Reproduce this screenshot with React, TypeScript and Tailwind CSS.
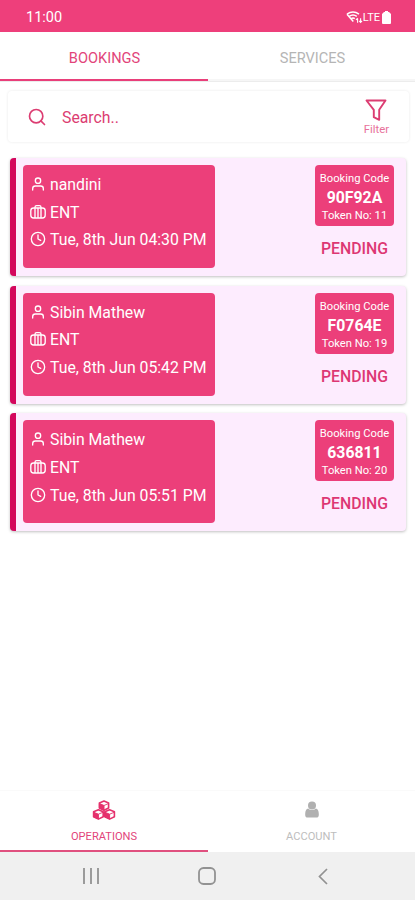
import React from "react";
import { FiClock, FiSearch, FiUser } from "react-icons/fi";

interface Booking {
  name: string;
  department: string;
  time: string;
  code: string;
  token: number;
  status: string;
}

const bookings: Booking[] = [
  {
    name: "nandini",
    department: "ENT",
    time: "Tue, 8th Jun 04:30 PM",
    code: "90F92A",
    token: 11,
    status: "PENDING",
  },
  {
    name: "Sibin Mathew",
    department: "ENT",
    time: "Tue, 8th Jun 05:42 PM",
    code: "F0764E",
    token: 19,
    status: "PENDING",
  },
  {
    name: "Sibin Mathew",
    department: "ENT",
    time: "Tue, 8th Jun 05:51 PM",
    code: "636811",
    token: 20,
    status: "PENDING",
  },
];

const SuitcaseIcon: React.FC = () => (
  <svg width="16" height="16" viewBox="0 0 16 16" fill="none" stroke="currentColor" strokeWidth="1.35">
    <rect x="0.8" y="4" width="14.4" height="10" rx="2.8" />
    <path d="M5 14V3.200a1.600 1.600 0 0 1 1.600-1.600h2.800A1.600 1.600 0 0 1 11 3.200V14M8 4v10" />
  </svg>
);

const FunnelIcon: React.FC = () => (
  <svg width="24" height="24" viewBox="0 0 24 24" fill="none" stroke="currentColor" strokeWidth="1.9" strokeLinejoin="round">
    <path d="M2.500 2.500h19l-6.300 9.300v10l-5.400-2.600v-7.400z" />
  </svg>
);

// three stacked cubes, left faces filled
const CubesIcon: React.FC = () => (
  <svg width="24" height="20" viewBox="0 0 24 20" stroke="currentColor" strokeWidth="1.6" strokeLinejoin="round">
    <g fill="none">
      <path d="M12 1l4.600 2v5L12 10.300 7.400 8V3z" />
      <path d="M6.400 9.800l4.800 2v5l-4.800 2.300-4.800-2.300v-5z" />
      <path d="M17.600 9.800l4.800 2v5l-4.800 2.300-4.800-2.300v-5z" />
    </g>
    <g fill="currentColor" strokeWidth="1">
      <path d="M7.400 3.500l4.600 2v4.500L7.400 8z" />
      <path d="M1.600 12.200l4.800 2v4.600l-4.800-2z" />
      <path d="M12.800 12.200l4.800 2v4.600l-4.800-2z" />
    </g>
    <g fill="none" strokeWidth="0.9">
      <path d="M12 5.500l4.600-2M6.400 14.200l4.800-2M17.600 14.200l4.800-2" />
    </g>
  </svg>
);

const PersonIcon: React.FC = () => (
  <svg width="14" height="17" viewBox="0 0 14 17" fill="currentColor">
    <circle cx="7" cy="4.5" r="4" />
    <path d="M3.2 7.4C1.4 7.7.2 9.600.2 12.700v1.200c0 1.600.9 2.700 2.500 2.700h8.600c1.600 0 2.500-1.100 2.500-2.700v-1.200c0-3.100-1.200-5-3-5.300A5 5 0 0 1 7 9a5 5 0 0 1-3.800-1.600z" />
  </svg>
);

const StatusBar: React.FC = () => (
  <div className="flex h-8 shrink-0 items-center justify-between bg-[#ee3f7b] pt-[3px] pl-[26px] pr-[24px] text-white">
    <span className="pt-px text-[14.5px] leading-none">11:00</span>
    <div className="flex items-center">
      <svg width="17" height="13" viewBox="0 0 17 13" fill="none" stroke="currentColor" strokeWidth="1.5">
        <path d="M1 3.2C4.6.5 9.4.5 13 3.2M3.2 5.4c2.3-1.7 5.3-1.7 7.6 0M5.2 7.6c1.1-.8 2.5-.8 3.6 0" />
        <path d="M1 3.2l6.3 7.3" />
        <path d="M11.6 11.8V7.4M10 9l1.6-1.8M14.6 7.2v4.2M13.2 9.8l1.4 1.7 1.4-1.7" strokeWidth="1.1" />
      </svg>
      <span className="text-[11px] leading-none">LTE</span>
      <svg className="ml-[2px]" width="9" height="13" viewBox="0 0 9 13" fill="currentColor">
        <path d="M3 0h3v1h1l2 2v9a1 1 0 0 1-1 1H1a1 1 0 0 1-1-1V3l2-2h1z" />
      </svg>
    </div>
  </div>
);

const TopTabs: React.FC = () => (
  <div className="flex h-[50px] shrink-0 border-b border-[#ececec] text-[14.6px]">
    <div className="flex w-[208px] items-center justify-center border-b-2 border-[#e93f7a] pt-[6px] pl-px text-[#e2447a]">
      BOOKINGS
    </div>
    <div className="flex flex-1 items-center justify-center border-b-2 border-[#f6f6f6] pt-[6px] pl-[2px] text-[#b5b5b5]">
      SERVICES
    </div>
  </div>
);

const SearchBar: React.FC = () => (
  <div className="mt-[9px] mr-[6px] ml-[8px] flex h-[51px] shrink-0 items-center rounded-sm pl-[19px] pr-[20px] text-[#dc3d72] shadow-[0_0_3px_rgba(0,0,0,0.09)]">
    <FiSearch size={20} />
    <span className="ml-[15px] flex-1 pt-[2px] text-[15.8px]">Search..</span>
    <div className="flex flex-col items-center pt-[2px]">
      <FunnelIcon />
      <span className="mt-px text-[11.3px] leading-[14px] text-[#e8719a]">Filter</span>
    </div>
  </div>
);

const BookingCard: React.FC<{ booking: Booking }> = ({ booking }) => (
  <div className="flex h-[118px] shrink-0 justify-between rounded border-l-[6px] border-[#d4075c] bg-[#fdecfe] pt-[7px] pr-[12px] pl-[7px] shadow-[0_1px_3px_rgba(0,0,0,0.25)]">
    <div className="flex h-[103px] w-[192px] flex-col rounded bg-[#ec3f7a] pt-[5px] pl-[7px] text-[15.8px] text-white">
      <div className="flex h-[27.700px] items-center gap-1">
        <FiUser size={16} />
        <span className="pt-[2px]">{booking.name}</span>
      </div>
      <div className="flex h-[27.700px] items-center gap-1">
        <SuitcaseIcon />
        <span className="pt-[2px]">{booking.department}</span>
      </div>
      <div className="flex h-[27.700px] items-center gap-1 whitespace-nowrap">
        <FiClock size={16} />
        <span className="pt-[2px]">{booking.time}</span>
      </div>
    </div>
    <div className="flex w-[79px] flex-col items-center">
      <div className="flex h-[61px] w-full flex-col items-center rounded bg-[#ec3f7a] pt-[5px] whitespace-nowrap text-white">
        <span className="text-[11.2px] leading-[18px]">Booking Code</span>
        <span className="text-[15.8px] leading-[19px] font-bold">{booking.code}</span>
        <span className="text-[11.2px] leading-[18px]">Token No: {booking.token}</span>
      </div>
      <span className="mt-[13px] text-[15.8px] leading-5 font-medium text-[#dd3773]">
        {booking.status}
      </span>
    </div>
  </div>
);

const BottomTabs: React.FC = () => (
  <div className="flex h-[62px] shrink-0 border-t border-[#fafafa] text-[11.1px] leading-3">
    <div className="flex w-[208px] flex-col items-center border-b-2 border-[#e0507f] pt-[9px] text-[#e2447a]">
      <div className="h-5 text-[#e5316d]">
        <CubesIcon />
      </div>
      <span className="mt-[11px]">OPERATIONS</span>
    </div>
    <div className="flex flex-1 flex-col items-center pt-[10px] text-[#bdbdbd]">
      <div className="h-[17px] text-[#b0b0b0]">
        <PersonIcon />
      </div>
      <span className="mt-[13px]">ACCOUNT</span>
    </div>
  </div>
);

const SystemNav: React.FC = () => (
  <div className="flex h-12 shrink-0 items-center bg-[#f0f0f0] text-[#929292]">
    <div className="flex w-[182px] justify-center">
      <svg width="18" height="16" viewBox="0 0 18 16" stroke="currentColor" strokeWidth="1.8">
        <path d="M2 0v16M9 0v16M16 0v16" />
      </svg>
    </div>
    <div className="flex w-[49px] justify-center">
      <svg width="18" height="18" viewBox="0 0 18 18" fill="none" stroke="currentColor" strokeWidth="1.8">
        <rect x="1" y="1" width="16" height="16" rx="4.500" />
      </svg>
    </div>
    <div className="flex w-[184px] justify-center">
      <svg width="10" height="17" viewBox="0 0 10 17" fill="none" stroke="currentColor" strokeWidth="1.7">
        <path d="M9 1L1.500 8.500L9 16" />
      </svg>
    </div>
  </div>
);

export default function App() {
  return (
    <div className="flex h-[900px] w-full flex-col bg-white font-[Roboto,sans-serif]">
      <StatusBar />
      <TopTabs />
      <SearchBar />
      <div className="mt-[16px] mr-[9px] ml-[10px] flex flex-1 flex-col gap-[9.700px]">
        {bookings.map((booking) => (
          <BookingCard key={booking.code} booking={booking} />
        ))}
      </div>
      <BottomTabs />
      <SystemNav />
    </div>
  );
}
